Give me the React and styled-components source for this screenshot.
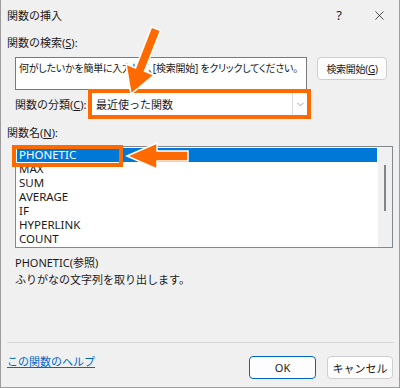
import React from 'react';
import styled, { createGlobalStyle } from 'styled-components';
import { X, ChevronDown } from 'lucide-react';

const GlobalStyle = createGlobalStyle`
    body {
        margin: 0;
        background: #f0f0f0;
        font-family: "Noto Sans", "Noto Sans CJK JP", sans-serif;
        font-size: 11px;
        color: #1a1a1a;
    }
`;

const ORANGE = '#ff6a00';

const Window = styled.div`
    position: relative;
    width: 400px;
    height: 388px;
    box-sizing: border-box;
    background: #f0f0f0;
    border: 1px solid #9c9c9c;
    border-top: none;
    display: flex;
    flex-direction: column;
`;

const TitleBar = styled.div`
    height: 30px;
    display: flex;
    align-items: center;
    padding-left: 6px;
`;

const Title = styled.div`
    flex: 1;
    font-size: 11px;
`;

const TitleButton = styled.div`
    width: 40px;
    height: 30px;
    display: flex;
    align-items: center;
    justify-content: center;
    font-size: 13px;
`;

const Body = styled.div`
    padding: 5px 5px 0 6px;
    display: flex;
    flex-direction: column;
`;

const Label = styled.div`
    line-height: 16px;
    height: 16px;
    margin-top: ${props => props.gap || 0}px;
`;

const SearchRow = styled.div`
    display: flex;
    align-items: flex-start;
    gap: 10px;
    margin-top: 6px;
    padding-left: 8px;
`;

const SearchBox = styled.div`
    width: 292px;
    height: 33px;
    box-sizing: border-box;
    border: 1px solid #7a7a7a;
    background: #fff;
    padding: 3px 3px;
    font-size: 10px;
    letter-spacing: -0.25px;
    font-feature-settings: "palt";
    line-height: 14px;
    white-space: nowrap;
    overflow: hidden;
`;

const Button = styled.div`
    width: ${props => props.w}px;
    height: 23px;
    box-sizing: border-box;
    display: flex;
    align-items: center;
    justify-content: center;
    background: #fdfdfd;
    border: 1px solid ${props => props.primary ? '#0067c0' : '#cfcfcf'};
    border-radius: 4px;
    font-size: ${props => props.small ? 10 : 11}px;
    letter-spacing: ${props => props.small ? -0.3 : 0}px;
    white-space: nowrap;
`;

const CategoryRow = styled.div`
    display: flex;
    align-items: center;
    margin-top: -1px;
    padding-left: 8px;
`;

const CategoryLabel = styled.div`
    width: 73px;
`;

const Highlight = styled.div`
    width: 223px;
    height: 30px;
    box-sizing: border-box;
    border: 4px solid ${ORANGE};
    display: flex;
`;

const Select = styled.div`
    flex: 1;
    display: flex;
    background: #fff;
`;

const SelectValue = styled.div`
    flex: 1;
    display: flex;
    align-items: center;
    padding-left: 4px;
`;

const SelectArrow = styled.div`
    width: 14px;
    border-left: 1px solid #dcdcdc;
    display: flex;
    align-items: center;
    justify-content: center;
    color: #606060;
`;

const ListBox = styled.div`
    margin-top: 5px;
    margin-left: 8px;
    width: 378px;
    height: 102px;
    box-sizing: border-box;
    border: 1px solid #828790;
    background: #fff;
    display: flex;
    overflow: hidden;
`;

const List = styled.div`
    flex: 1;
    padding: 1px;
`;

const Row = styled.div`
    height: 14px;
    line-height: 14px;
    padding-left: 2px;
    font-size: 11.5px;
    background: ${props => props.selected ? '#0078d7' : 'transparent'};
    color: ${props => props.selected ? '#fff' : '#1a1a1a'};
`;

const ScrollTrack = styled.div`
    width: 14px;
    background: #f0f0f0;
    display: flex;
    justify-content: center;
    padding-top: 18px;
    box-sizing: border-box;
`;

const ScrollThumb = styled.div`
    width: 2px;
    height: 46px;
    background: #858585;
`;

const Description = styled.div`
    margin-top: 6px;
    margin-left: 8px;
    line-height: 17px;
`;

const Spacer = styled.div`
    flex: 1;
`;

const Separator = styled.div`
    height: 1px;
    margin: 0 5px 0 6px;
    background: #d9d9d9;
`;

const Footer = styled.div`
    display: flex;
    align-items: flex-start;
    gap: 11px;
    padding: 13px 6px 8px 6px;
`;

const HelpLink = styled.a`
    line-height: 14px;
    margin-top: -1px;
    color: #0066cc;
    text-decoration: underline;
    margin-right: auto;
`;

const Marker = styled.div`
    position: absolute;
    left: 11px;
    top: 145px;
    width: 111px;
    height: 22px;
    box-sizing: border-box;
    border: 4px solid ${ORANGE};
`;

const Arrows = styled.svg`
    position: absolute;
    left: -1px;
    top: 0;
    pointer-events: none;
`;

const functions = ['PHONETIC', 'MAX', 'SUM', 'AVERAGE', 'IF', 'HYPERLINK', 'COUNT'];

export default function App() {
    return (
        <>
            <GlobalStyle />
            <Window>
                <TitleBar>
                    <Title>関数の挿入</Title>
                    <TitleButton>?</TitleButton>
                    <TitleButton><X size={15} strokeWidth={1.2} /></TitleButton>
                </TitleBar>
                <Body>
                    <Label>関数の検索(<u>S</u>):</Label>
                    <SearchRow>
                        <SearchBox>何がしたいかを簡単に入力して、[検索開始] をクリックしてください。</SearchBox>
                        <Button w={70} small>検索開始(<u>G</u>)</Button>
                    </SearchRow>
                    <CategoryRow>
                        <CategoryLabel>関数の分類(<u>C</u>):</CategoryLabel>
                        <Highlight>
                            <Select>
                                <SelectValue>最近使った関数</SelectValue>
                                <SelectArrow><ChevronDown size={11} strokeWidth={1.3} /></SelectArrow>
                            </Select>
                        </Highlight>
                    </CategoryRow>
                    <Label gap={6}>関数名(<u>N</u>):</Label>
                    <ListBox>
                        <List>
                            {functions.map((f, i) => (
                                <Row key={f} selected={i === 0}>{f}</Row>
                            ))}
                        </List>
                        <ScrollTrack><ScrollThumb /></ScrollTrack>
                    </ListBox>
                    <Description>
                        <div>PHONETIC(参照)</div>
                        <div>ふりがなの文字列を取り出します。</div>
                    </Description>
                </Body>
                <Spacer />
                <Separator />
                <Footer>
                    <HelpLink href="#">この関数のヘルプ</HelpLink>
                    <Button w={67} primary>OK</Button>
                    <Button w={66}>キャンセル</Button>
                </Footer>
                <Marker />
                <Arrows width="400" height="388" viewBox="0 0 400 388">
                    <polygon
                        points="151.5,27 160.5,30.5 144.5,71 154,75 131,94 126,64 135.5,68"
                        fill={ORANGE} stroke="#fff" strokeWidth="1.5" strokeLinejoin="miter"
                    />
                    <polygon
                        points="127,156 157,143 157,151 188,151 188,161 157,161 157,169"
                        fill={ORANGE} stroke="#fff" strokeWidth="1.5"
                    />
                </Arrows>
            </Window>
        </>
    );
}
